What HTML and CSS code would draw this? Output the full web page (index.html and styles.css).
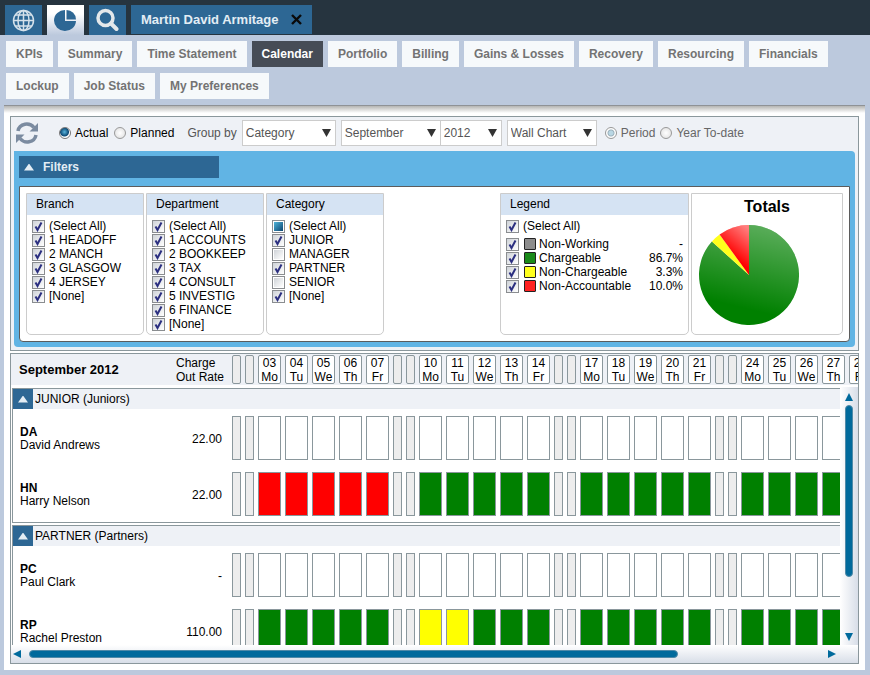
FILE: index.html
```html
<!DOCTYPE html>
<html lang="en">
<head>
    <meta charset="UTF-8">
    <meta name="viewport" content="width=device-width, initial-scale=1.0">
    <title>Calendar</title>
    <link rel="stylesheet" href="styles.css">
</head>
<body>
    <header class="topbar">
        <button class="icon-tab" aria-label="Home">
            <svg width="23" height="24" viewBox="0 0 23 24" fill="none" stroke="#d5e1ea" stroke-width="1.5">
                <circle cx="11.500" cy="12.500" r="10"/>
                <ellipse cx="11.500" cy="12.500" rx="5.500" ry="10"/>
                <path d="M11.500 2.500v20M1.500 12.500h20M3.500 7h16M3.500 18h16"/>
            </svg>
        </button>
        <button class="icon-tab icon-tab-active" aria-label="Reports">
            <svg width="23" height="24" viewBox="0 0 23 24" fill="#2d6794">
                <path d="M11 2v11h11A11 10.500 0 1 1 11 2z"/>
                <path d="M12.500 2A9.500 9.500 0 0 1 22 11.500h-9.500z"/>
            </svg>
        </button>
        <button class="icon-tab" aria-label="Search">
            <svg width="23" height="24" viewBox="0 0 23 24" fill="none" stroke="#e4e8ea">
                <circle cx="9.500" cy="10" r="7.500" stroke-width="3.500"/>
                <path d="M15 15.500l5.500 5.500" stroke-width="4" stroke-linecap="round"/>
            </svg>
        </button>
        <div class="client-tab">
            <span>Martin David Armitage</span>
            <button class="close" aria-label="Close">
                <svg width="11" height="11" viewBox="0 0 11 11" stroke="#0a0a0a" stroke-width="2.400"><path d="M1 1l9 9M10 1l-9 9"/></svg>
            </button>
        </div>
    </header>

    <nav class="tabs">
        <a href="#">KPIs</a>
        <a href="#">Summary</a>
        <a href="#">Time Statement</a>
        <a href="#" class="active">Calendar</a>
        <a href="#">Portfolio</a>
        <a href="#">Billing</a>
        <a href="#">Gains &amp; Losses</a>
        <a href="#">Recovery</a>
        <a href="#">Resourcing</a>
        <a href="#">Financials</a>
        <a href="#">Lockup</a>
        <a href="#">Job Status</a>
        <a href="#">My Preferences</a>
    </nav>

    <main class="page">
        <section class="panel">
            <div class="toolbar">
                <button class="refresh" aria-label="Refresh">
                    <svg width="22" height="22" viewBox="0 0 22 22" fill="none" stroke="#7b8ba0" stroke-width="3.500">
                        <path d="M2 9C3.500 1 13.500 0 18 5.500"/>
                        <path d="M20 13C18.500 21 8.500 22 4 16.500"/>
                        <path d="M22 1v8.500h-8.500zM0 21v-8.500h8.500z" fill="#7b8ba0" stroke="none"/>
                    </svg>
                </button>
                <label class="radio"><input type="radio" name="kind" checked>Actual</label>
                <label class="radio"><input type="radio" name="kind">Planned</label>
                <label class="group-label" for="group-by">Group by</label>
                <select id="group-by" class="select-group"><option>Category</option></select>
                <div class="period">
                    <select class="select-month" aria-label="Month"><option>September</option></select>
                    <select class="select-year" aria-label="Year"><option>2012</option></select>
                </div>
                <select class="select-view" aria-label="View"><option>Wall Chart</option></select>
                <div class="range">
                    <label class="radio"><input type="radio" name="range" checked disabled>Period</label>
                    <label class="radio"><input type="radio" name="range" disabled>Year To-date</label>
                </div>
            </div>

            <div class="filters">
                <button class="filters-title"><span class="arrow-up"></span>Filters</button>
                <div class="filters-body">
                    <div class="card">
                        <h2>Branch</h2>
                        <div class="checks">
                            <label><input type="checkbox" checked>(Select All)</label>
                            <label><input type="checkbox" checked>1 HEADOFF</label>
                            <label><input type="checkbox" checked>2 MANCH</label>
                            <label><input type="checkbox" checked>3 GLASGOW</label>
                            <label><input type="checkbox" checked>4 JERSEY</label>
                            <label><input type="checkbox" checked>[None]</label>
                        </div>
                    </div>
                    <div class="card">
                        <h2>Department</h2>
                        <div class="checks">
                            <label><input type="checkbox" checked>(Select All)</label>
                            <label><input type="checkbox" checked>1 ACCOUNTS</label>
                            <label><input type="checkbox" checked>2 BOOKKEEP</label>
                            <label><input type="checkbox" checked>3 TAX</label>
                            <label><input type="checkbox" checked>4 CONSULT</label>
                            <label><input type="checkbox" checked>5 INVESTIG</label>
                            <label><input type="checkbox" checked>6 FINANCE</label>
                            <label><input type="checkbox" checked>[None]</label>
                        </div>
                    </div>
                    <div class="card">
                        <h2>Category</h2>
                        <div class="checks">
                            <label><input type="checkbox" id="category-all">(Select All)</label>
                            <label><input type="checkbox" checked>JUNIOR</label>
                            <label><input type="checkbox">MANAGER</label>
                            <label><input type="checkbox" checked>PARTNER</label>
                            <label><input type="checkbox">SENIOR</label>
                            <label><input type="checkbox" checked>[None]</label>
                        </div>
                    </div>
                    <div class="card legend">
                        <h2>Legend</h2>
                        <div class="checks">
                            <label class="all"><input type="checkbox" checked>(Select All)</label>
                            <label><input type="checkbox" checked><i class="swatch gray"></i>Non-Working<b>-</b></label>
                            <label><input type="checkbox" checked><i class="swatch green"></i>Chargeable<b>86.7%</b></label>
                            <label><input type="checkbox" checked><i class="swatch yellow"></i>Non-Chargeable<b>3.3%</b></label>
                            <label><input type="checkbox" checked><i class="swatch red"></i>Non-Accountable<b>10.0%</b></label>
                        </div>
                    </div>
                    <div class="card totals">
                        <h3>Totals</h3>
                        <svg width="100" height="100" viewBox="-50 -50 100 100">
                            <defs>
                                <linearGradient id="shine" gradientUnits="userSpaceOnUse" x1="18" y1="-50" x2="-2" y2="34">
                                    <stop offset="0" stop-color="#fff" stop-opacity=".36"/>
                                    <stop offset="1" stop-color="#fff" stop-opacity="0"/>
                                </linearGradient>
                                <linearGradient id="shine-red" gradientUnits="userSpaceOnUse" x1="0" y1="-46" x2="-20" y2="-22">
                                    <stop offset="0" stop-color="#fff" stop-opacity=".5"/>
                                    <stop offset="1" stop-color="#fff" stop-opacity="0"/>
                                </linearGradient>
                            </defs>
                            <path d="M0 0V-50A50 50 0 1 1 -37.100 -33.500z" fill="#008000"/>
                            <path d="M0 0V-50A50 50 0 1 1 -37.100 -33.500z" fill="url(#shine)"/>
                            <path d="M0 0L-37.100 -33.500A50 50 0 0 1 -29.400 -40.500z" fill="#ffff1c"/>
                            <path d="M0 0L-29.400 -40.500A50 50 0 0 1 0 -50z" fill="#f00"/>
                            <path d="M0 0L-29.400 -40.500A50 50 0 0 1 0 -50z" fill="url(#shine-red)"/>
                        </svg>
                    </div>
                </div>
            </div>
        </section>

        <section class="calendar">
            <div class="calendar-head">
                <table>
                    <tr id="days">
                        <th class="title"><div>September 2012</div></th>
                        <th class="rate"><div>Charge<br>Out Rate</div></th>
                    </tr>
                </table>
            </div>
            <div class="calendar-view">
                <div class="calendar-rows">
                    <div class="group">
                        <div class="group-title"><button aria-label="Collapse"><span class="arrow-up"></span></button>JUNIOR (Juniors)</div>
                        <table>
                            <tr data-days="----- ----- ----- -----">
                                <td class="title"><div><b>DA</b>David Andrews</div></td>
                                <td class="rate"><div>22.00</div></td>
                            </tr>
                            <tr data-days="rrrrr ggggg ggggg ggggg">
                                <td class="title"><div><b>HN</b>Harry Nelson</div></td>
                                <td class="rate"><div>22.00</div></td>
                            </tr>
                        </table>
                    </div>
                    <div class="group">
                        <div class="group-title"><button aria-label="Collapse"><span class="arrow-up"></span></button>PARTNER (Partners)</div>
                        <table>
                            <tr data-days="----- ----- ----- -----">
                                <td class="title"><div><b>PC</b>Paul Clark</div></td>
                                <td class="rate"><div>-</div></td>
                            </tr>
                            <tr data-days="ggggg yyggg ggggg ggggg">
                                <td class="title"><div><b>RP</b>Rachel Preston</div></td>
                                <td class="rate"><div>110.00</div></td>
                            </tr>
                        </table>
                    </div>
                </div>
                <div class="vscroll">
                    <button class="up" aria-label="Scroll up"></button>
                    <div class="track"><div class="thumb"></div></div>
                    <button class="down" aria-label="Scroll down"></button>
                </div>
            </div>
            <div class="hscroll">
                <button class="left" aria-label="Scroll left"></button>
                <div class="track"><div class="thumb"></div></div>
                <button class="right" aria-label="Scroll right"></button>
            </div>
        </section>
    </main>
    <script src="calendar.js"></script>
</body>
</html>
```
FILE: styles.css
```css
* {
    box-sizing: border-box;
}
body {
    margin: 0;
    height: 100vh;
    display: flex;
    flex-direction: column;
    overflow: hidden;
    background-color: #bcc9dd;
    color: #000;
    font: 12px/14px "Liberation Sans", Arial, sans-serif;
}
button {
    padding: 0;
    border: 0;
    background: none;
    font: inherit;
}
table {
    border-collapse: collapse;
}
td, th {
    padding: 0;
    font-weight: normal;
    text-align: left;
}
label {
    display: flex;
    align-items: center;
}

/* top bar */
.topbar {
    display: flex;
    flex: none;
    gap: 5px;
    height: 35px;
    padding: 5px 5px 0;
    background-color: #26343f;
}
.icon-tab {
    display: flex;
    align-items: center;
    justify-content: center;
    width: 37px;
    height: 30px;
    background-color: #2d6794;
}
.icon-tab-active {
    background: linear-gradient(#fff 30%, #bcc9dd);
}
.client-tab {
    display: flex;
    align-items: center;
    gap: 12px;
    height: 29px;
    padding: 0 10px;
    background-color: #2d6794;
    color: #e3edf4;
    font-size: 13px;
    font-weight: bold;
}
.close {
    display: flex;
}

/* tabs */
.tabs {
    display: flex;
    flex: none;
    flex-wrap: wrap;
    gap: 6px 5px;
    padding: 6px;
}
.tabs a {
    height: 26px;
    padding: 0 10px;
    background-color: #f6f9fb;
    color: #737373;
    font-weight: bold;
    line-height: 26px;
    text-decoration: none;
}
.tabs a.active {
    background-color: #464c56;
    color: #fff;
}

.page {
    display: flex;
    flex: 1;
    flex-direction: column;
    gap: 2px;
    min-height: 0;
    margin: 0 5px 5px 4px;
    padding: 10px 6px 6px;
    border-top: 1px solid #8f9296;
    background: linear-gradient(#b5b5b3, #fff 7px);
}
.panel {
    flex: none;
    padding: 0 3px 3px;
    border: 1px solid #8a979c;
    background-color: #eef1f6;
}

/* toolbar */
.toolbar {
    display: flex;
    align-items: center;
    height: 34px;
    padding: 0 2px 2px;
    color: #555;
}
.refresh {
    display: flex;
    margin-right: 21px;
}
.radio {
    gap: 4px;
    margin-right: 6px;
    color: #000;
    white-space: nowrap;
}
.range .radio {
    margin-right: 5px;
    color: #666;
}
.range, .period {
    display: flex;
}
.radio input {
    appearance: none;
    width: 12px;
    height: 12px;
    margin: 0;
    border: 1px solid #999;
    border-radius: 50%;
    background: radial-gradient(#fff, #ddd);
}
.radio input:checked {
    border-color: #777;
    background: radial-gradient(circle at 45% 40%, #5ab6de, #0d4a75 4px, #fff 5px);
}
.radio input:checked:disabled {
    border-color: #999;
    background: radial-gradient(circle, #b9d7e4 2px, #9bb0bb 3px, #fff 4px);
}
.group-label {
    margin: 0 5px 0 7px;
}
select {
    appearance: none;
    height: 26px;
    padding: 0 14px 0 3px;
    border: 1px solid #ccc;
    border-radius: 0;
    background: #fff url("data:image/svg+xml,%3Csvg xmlns='http://www.w3.org/2000/svg' width='9' height='8'%3E%3Cpath d='M0 0h9L4.500 8z' fill='%23333'/%3E%3C/svg%3E") no-repeat right 4px center;
    color: #555;
    font: inherit;
}
.select-group {
    width: 94px;
    margin-right: 5px;
}
.select-month {
    width: 100px;
}
.select-year {
    width: 61px;
    border-left: 0;
}
.select-view {
    width: 90px;
    margin: 0 8px 0 5px;
}

/* filters */
.filters {
    padding: 5px;
    border-radius: 0 4px 4px 4px;
    background-color: #61b4e4;
}
.arrow-up {
    width: 10px;
    height: 7px;
    background-color: #e3edf4;
    clip-path: polygon(50% 0, 100% 100%, 0 100%);
}
.filters-title {
    display: flex;
    align-items: center;
    gap: 9px;
    width: 200px;
    height: 22px;
    margin-bottom: 8px;
    padding-left: 5px;
    background-color: #2d6794;
    color: #e3edf4;
    font-weight: bold;
}
.filters-body {
    display: flex;
    gap: 2px;
    padding: 6px;
    border: 1px solid #5c5c5c;
    border-radius: 0 0 4px 4px;
    background-color: #fff;
}
.card {
    width: 118px;
    height: 142px;
    border: 1px solid #ccc;
    border-radius: 0 0 5px 5px;
}
.card h2 {
    margin: 0;
    padding-left: 9px;
    background-color: #d5e3f3;
    font-size: 12px;
    font-weight: normal;
    line-height: 21px;
}
.checks {
    padding: 4px 5px;
}
.checks label {
    gap: 4px;
    height: 14px;
}
.checks input {
    appearance: none;
    flex: none;
    width: 13px;
    height: 13px;
    margin: 0;
    border: 1px solid #8a8d90;
    background: linear-gradient(135deg, #cfd3d8, #fff) content-box;
    padding: 1px;
}
.checks input:checked {
    background: url("data:image/svg+xml,%3Csvg xmlns='http://www.w3.org/2000/svg' width='11' height='11'%3E%3Cpath d='M2.500 5.500l2 3.500 4-7.500' fill='none' stroke='%232b2f80' stroke-width='2'/%3E%3C/svg%3E") no-repeat, linear-gradient(135deg, #cfd3d8, #fff);
}
.checks input:indeterminate {
    background: linear-gradient(135deg, #4fb3d8, #0b4571) content-box;
}
.legend {
    width: 189px;
    margin-left: auto;
}
.legend .all {
    margin-bottom: 4px;
}
.legend b {
    margin-left: auto;
    font-weight: normal;
}
.legend .swatch {
    width: 12px;
    height: 12px;
    margin: 0 -1px 0 1px;
    border: 1px solid #222;
    border-radius: 1px;
}
.swatch.gray {
    background-color: #8c8c8c;
}
.swatch.green {
    background-color: #1a8a1a;
}
.swatch.yellow {
    background-color: #ffff1c;
}
.swatch.red {
    background-color: #ff2222;
}
.totals {
    width: 152px;
    padding: 4px 7px;
}
.totals h3 {
    margin: 0 0 9px;
    font-size: 16px;
    line-height: 18px;
    text-align: center;
}
.totals svg {
    display: block;
}

/* calendar */
.calendar {
    display: flex;
    flex: 1;
    flex-direction: column;
    min-height: 0;
    border: 1px solid #8a979c;
    background-color: #fff;
}
.calendar-head {
    flex: none;
    overflow: hidden;
    margin-bottom: 2px;
    padding: 1px 0 1px 2px;
    background-color: #eef1f6;
}
.title div {
    width: 150px;
    padding-left: 7px;
}
.calendar-head .title div {
    padding-left: 6px;
    font-size: 13px;
    font-weight: bold;
}
.rate div {
    width: 67px;
    padding-right: 8px;
    text-align: right;
}
.calendar-head .rate div {
    padding: 0 0 0 13px;
    text-align: left;
    white-space: nowrap;
}
.day {
    width: 23px;
    height: 44px;
    margin: 0 2px;
    border: 1px solid #8a979c;
}
.weekend {
    width: 9px;
    background-color: #ededed;
}
.calendar-head .day {
    height: 29px;
    border-radius: 2px;
    text-align: center;
}
.calendar-head .day:not(.weekend) {
    background-color: #fff;
}
.day.r {
    background-color: #f00;
}
.day.g {
    background-color: #008000;
}
.day.y {
    background-color: #ff0;
}
.calendar-view {
    display: flex;
    flex: 1;
    min-height: 0;
}
.calendar-rows {
    flex: 1;
    min-width: 0;
    padding: 1px 0 0 1px;
    overflow: hidden;
}
.group {
    margin-bottom: 2px;
    border: 1px solid #8a979c;
    border-right: 0;
}
.group table {
    margin-top: 1px;
}
.group-title {
    display: flex;
    align-items: center;
    gap: 2px;
    height: 20px;
    background-color: #eef1f6;
    line-height: 16px;
}
.group-title button {
    display: flex;
    align-items: center;
    justify-content: center;
    width: 20px;
    height: 20px;
    background-color: #2d6794;
}
.group td {
    height: 56px;
}
.group b {
    display: block;
}
.group .title div {
    padding-top: 2px;
    line-height: 13px;
}
.group .rate div {
    padding-top: 2px;
}

/* scroll bars */
.vscroll, .hscroll {
    display: flex;
    flex: none;
    align-items: center;
}
.vscroll {
    flex-direction: column;
    gap: 4px;
    width: 18px;
    padding: 6px 0 4px;
    background: linear-gradient(90deg, #fff, #d8dee8);
}
.hscroll {
    gap: 8px;
    height: 18px;
    padding: 0 22px 0 2px;
    background: linear-gradient(#fff, #d8dee8);
}
.track {
    flex: 1;
}
.thumb {
    border: 1px solid #4f8aa8;
    border-radius: 4px;
    background-color: #006a9c;
}
.vscroll .thumb {
    width: 8px;
    height: 77%;
}
.hscroll .thumb {
    width: 82%;
    height: 8px;
}
.up, .down, .left, .right {
    width: 8px;
    height: 8px;
    background-color: #006a9c;
}
.up {
    clip-path: polygon(50% 0, 100% 100%, 0 100%);
}
.down {
    clip-path: polygon(0 0, 100% 0, 50% 100%);
}
.left {
    clip-path: polygon(0 50%, 100% 0, 100% 100%);
}
.right {
    clip-path: polygon(0 0, 100% 50%, 0 100%);
}
```
FILE: calendar.js
```js
const names = ['Mo', 'Tu', 'We', 'Th', 'Fr'];

function addDay(row, tag, className, html) {
    const cell = document.createElement(tag);
    cell.innerHTML = `<div class="day ${className}">${html}</div>`;
    row.append(cell);
}

// the month starts on a Saturday, so each week is weekend first
const head = document.querySelector('#days');
for (let week = 0; week < 4; week++) {
    addDay(head, 'th', 'weekend', '');
    addDay(head, 'th', 'weekend', '');
    names.forEach((name, i) => {
        const date = String(week * 7 + i + 3).padStart(2, '0');
        addDay(head, 'th', '', `${date}<br>${name}`);
    });
}

document.querySelectorAll('tr[data-days]').forEach((row) => {
    row.dataset.days.split(' ').forEach((week) => {
        addDay(row, 'td', 'weekend', '');
        addDay(row, 'td', 'weekend', '');
        for (const day of week) {
            addDay(row, 'td', day === '-' ? '' : day, '');
        }
    });
});

document.querySelector('#category-all').indeterminate = true;
```
